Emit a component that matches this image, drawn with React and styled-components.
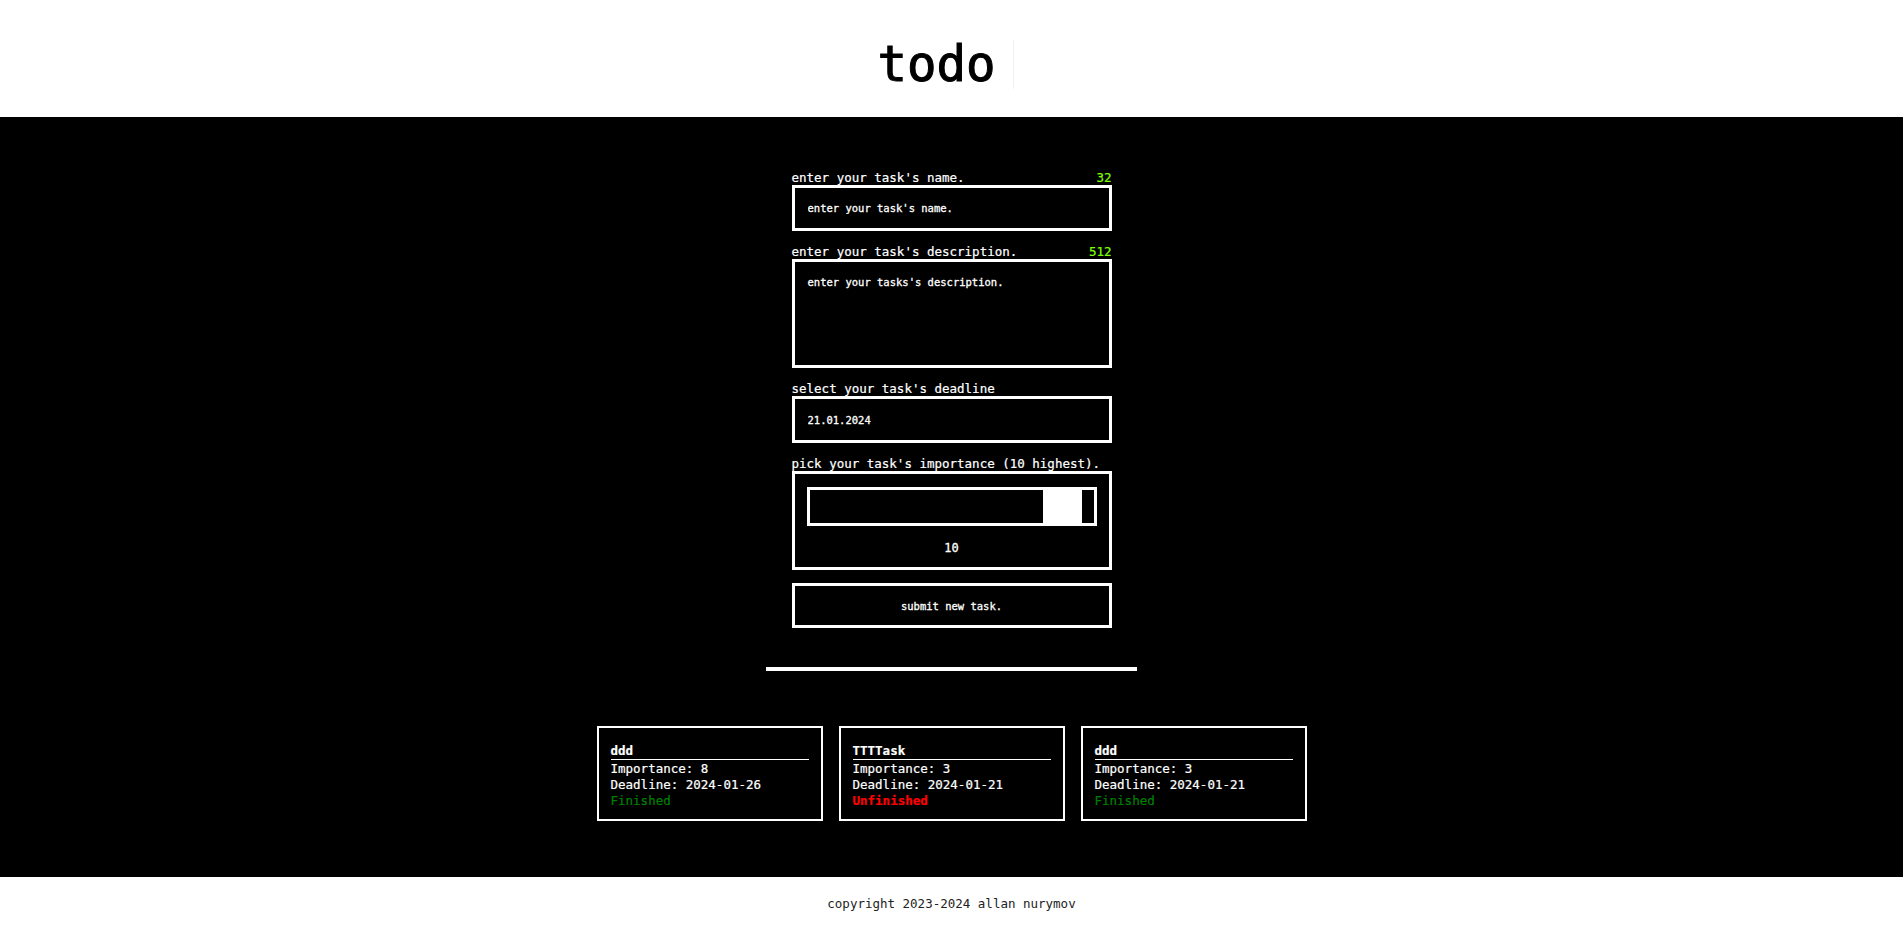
import React, { useState } from 'react'
import styled, { createGlobalStyle } from 'styled-components'

const GlobalStyle = createGlobalStyle`
    * {
        box-sizing: border-box;
    }
    body {
        margin: 0;
        background: #ffffff;
        font-family: "DejaVu Sans Mono", "Liberation Mono", monospace;
    }
`

const Header = styled.header`
    height: 117px;
    display: flex;
    justify-content: center;
    align-items: flex-start;
    padding-top: 40px;
    background: #ffffff;
`

const Title = styled.h1`
    margin: 0 0 0 -12px;
    padding-right: 17px;
    font-size: 49px;
    font-weight: normal;
    line-height: 49px;
    color: #000000;
    -webkit-text-stroke: 1px #000000;
    border-right: 1px solid #f2f2f2;
`

const Main = styled.main`
    background: #000000;
    padding: 53px 0 56px;
    display: flex;
    flex-direction: column;
    align-items: center;
`

const Form = styled.form`
    width: 320px;
    display: flex;
    flex-direction: column;
    gap: 13px;
`

const Field = styled.div`
    display: flex;
    flex-direction: column;
`

const LabelRow = styled.div`
    display: flex;
    justify-content: space-between;
    font-size: 12.5px;
    line-height: 15px;
    color: #ffffff;
    -webkit-text-stroke: 0.2px #ffffff;
`

const Counter = styled.span`
    color: #7fff00;
    -webkit-text-stroke: 0.2px #7fff00;
`

const boxStyles = `
    width: 100%;
    background: #000000;
    border: 3px solid #ffffff;
    color: #ffffff;
    font-family: "DejaVu Sans Mono", "Liberation Mono", monospace;
    font-size: 10.5px;
    -webkit-text-stroke: 0.3px #ffffff;
    outline: none;
`

const TextInput = styled.input`
    ${boxStyles}
    height: ${p => p.$h || 46}px;
    padding: 0 13px;
    &::placeholder {
        color: #ffffff;
        opacity: 1;
    }
`

const TextArea = styled.textarea`
    ${boxStyles}
    height: 109px;
    padding: 13px 13px;
    resize: none;
    line-height: 14px;
    &::placeholder {
        color: #ffffff;
        opacity: 1;
    }
`

const RangeBox = styled.div`
    border: 3px solid #ffffff;
    padding: 13px 12px 11px;
    display: flex;
    flex-direction: column;
    align-items: center;
`

const Range = styled.input`
    -webkit-appearance: none;
    appearance: none;
    width: 100%;
    height: 39px;
    margin: 0;
    background: #000000;
    border: 3px solid #ffffff;
    outline: none;

    &::-webkit-slider-thumb {
        -webkit-appearance: none;
        width: 51px;
        height: 33px;
        border: none;
        background: linear-gradient(to right, #ffffff 39px, #000000 39px);
    }
`

const RangeValue = styled.div`
    margin-top: 14px;
    font-size: 12px;
    line-height: 16px;
    color: #ffffff;
    -webkit-text-stroke: 0.3px #ffffff;
`

const Submit = styled.button`
    ${boxStyles}
    height: 45px;
    cursor: pointer;
`

const Divider = styled.hr`
    width: 371px;
    height: 4px;
    margin: 39px 0 55px;
    border: none;
    background: #ffffff;
`

const Cards = styled.div`
    display: flex;
    gap: 16px;
`

const Card = styled.div`
    width: 226px;
    border: 2px solid #ffffff;
    padding: 15px 12px 10px;
    color: #ffffff;
    font-size: 12.5px;
    line-height: 16px;
    -webkit-text-stroke: 0.2px #ffffff;
`

const CardTitle = styled.div`
    font-weight: bold;
    border-bottom: 1px solid #ffffff;
    margin-bottom: 1px;
`

const Status = styled.div`
    color: ${p => (p.$done ? '#008000' : '#ff0000')};
    -webkit-text-stroke: 0.2px ${p => (p.$done ? '#008000' : '#ff0000')};
    font-weight: ${p => (p.$done ? 'normal' : 'bold')};
`

const Footer = styled.footer`
    height: 50px;
    display: flex;
    justify-content: center;
    align-items: center;
    padding-top: 2px;
    font-size: 12.5px;
    color: #222222;
    background: #ffffff;
`

const tasks = [
    { name: 'ddd', importance: 8, deadline: '2024-01-26', done: true },
    { name: 'TTTTask', importance: 3, deadline: '2024-01-21', done: false },
    { name: 'ddd', importance: 3, deadline: '2024-01-21', done: true },
]

export default function App() {
    const [importance, setImportance] = useState(10)

    return (
        <>
            <GlobalStyle />
            <Header>
                <Title>todo</Title>
            </Header>
            <Main>
                <Form onSubmit={e => e.preventDefault()}>
                    <Field>
                        <LabelRow>
                            <span>enter your task's name.</span>
                            <Counter>32</Counter>
                        </LabelRow>
                        <TextInput placeholder="enter your task's name." />
                    </Field>
                    <Field>
                        <LabelRow>
                            <span>enter your task's description.</span>
                            <Counter>512</Counter>
                        </LabelRow>
                        <TextArea placeholder="enter your tasks's description." />
                    </Field>
                    <Field>
                        <LabelRow>
                            <span>select your task's deadline</span>
                        </LabelRow>
                        <TextInput $h={47} defaultValue="21.01.2024" />
                    </Field>
                    <Field>
                        <LabelRow>
                            <span>pick your task's importance (10 highest).</span>
                        </LabelRow>
                        <RangeBox>
                            <Range
                                type="range"
                                min="1"
                                max="10"
                                value={importance}
                                onChange={e => setImportance(e.target.value)}
                            />
                            <RangeValue>{importance}</RangeValue>
                        </RangeBox>
                    </Field>
                    <Submit type="submit">submit new task.</Submit>
                </Form>
                <Divider />
                <Cards>
                    {tasks.map((t, i) => (
                        <Card key={i}>
                            <CardTitle>{t.name}</CardTitle>
                            <div>Importance: {t.importance}</div>
                            <div>Deadline: {t.deadline}</div>
                            <Status $done={t.done}>{t.done ? 'Finished' : 'Unfinished'}</Status>
                        </Card>
                    ))}
                </Cards>
            </Main>
            <Footer>copyright 2023-2024 allan nurymov</Footer>
        </>
    )
}
